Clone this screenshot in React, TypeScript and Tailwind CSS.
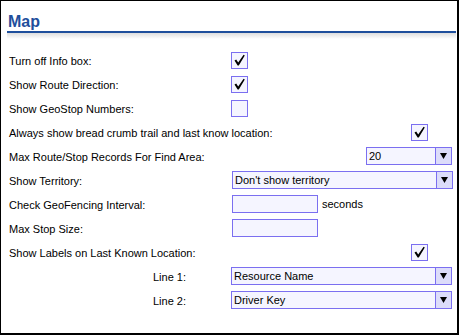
import type { ReactNode } from "react";

function Check({ checked }: { checked?: boolean }) {
  return (
    <div className="flex h-[17px] w-[17px] items-center justify-center border border-[#7b6ff0] bg-[#f5f5ff]">
      {checked && (
        <svg width="15" height="15" viewBox="0 0 15 15">
          <path d="M2.5 7.6 L4.2 6.6 L6.2 9.6 L11.6 1.8 L12.8 2.6 L6.8 12.6 L5.6 12.6 Z" fill="#000" />
        </svg>
      )}
    </div>
  );
}

function Select({ value, className }: { value: string; className: string }) {
  return (
    <div className={`flex h-[18px] border border-[#7b6ff0] bg-[#f5f5ff] ${className}`}>
      <div className="flex flex-1 items-center pl-[2px] pt-[1px] text-[11px] leading-none text-black">{value}</div>
      <div className="flex w-[16px] items-center justify-center border-l border-[#7b6ff0] bg-[#dcdcfa]">
        <svg width="7" height="6" viewBox="0 0 7 6">
          <path d="M0 0 H7 L3.5 6 Z" fill="#000" />
        </svg>
      </div>
    </div>
  );
}

function Input() {
  return <div className="h-[18px] w-[86px] border border-[#7b6ff0] bg-[#f5f5ff]" />;
}

function Row({ label, indent, children }: { label: string; indent?: boolean; children?: ReactNode }) {
  return (
    <div className="flex h-[24px] items-center">
      <div className={`w-[222px] shrink-0 whitespace-nowrap pt-[3px] ${indent ? "pl-[144px]" : ""}`}>{label}</div>
      <div className="flex flex-1 items-center">{children}</div>
    </div>
  );
}

export default function App() {
  return (
    <div className="h-[335px] w-[459px] border-t border-l border-r-2 border-b-2 border-black bg-white font-['Liberation_Sans',Arial,sans-serif] text-[11px] text-black">
      <div className="pl-[6px] pr-[1px] pt-[11px]">
        <div className="border-b-2 border-[#1f4f9c] pl-[1px] text-[16px] font-bold leading-[19px] text-[#1f4f9c]">
          Map
        </div>
        <div className="h-[6px] bg-gradient-to-b from-[#dedede] to-white" />
      </div>
      <div className="pl-[8px] pt-[9px]">
        <Row label="Turn off Info box:">
          <Check checked />
        </Row>
        <Row label="Show Route Direction:">
          <Check checked />
        </Row>
        <Row label="Show GeoStop Numbers:">
          <Check />
        </Row>
        <Row label="Always show bread crumb trail and last know location:">
          <div className="ml-[180px]">
            <Check checked />
          </div>
        </Row>
        <Row label="Max Route/Stop Records For Find Area:">
          <Select value="20" className="ml-[135px] w-[86px]" />
        </Row>
        <Row label="Show Territory:">
          <Select value="Don't show territory" className="ml-[1px] w-[221px]" />
        </Row>
        <Row label="Check GeoFencing Interval:">
          <div className="ml-[1px] flex items-center gap-[4px]">
            <Input />
            <span className="pt-[1px]">seconds</span>
          </div>
        </Row>
        <Row label="Max Stop Size:">
          <div className="ml-[1px]">
            <Input />
          </div>
        </Row>
        <Row label="Show Labels on Last Known Location:">
          <div className="ml-[180px]">
            <Check checked />
          </div>
        </Row>
        <Row label="Line 1:" indent>
          <Select value="Resource Name" className="w-[221px]" />
        </Row>
        <Row label="Line 2:" indent>
          <Select value="Driver Key" className="w-[221px]" />
        </Row>
      </div>
    </div>
  );
}
